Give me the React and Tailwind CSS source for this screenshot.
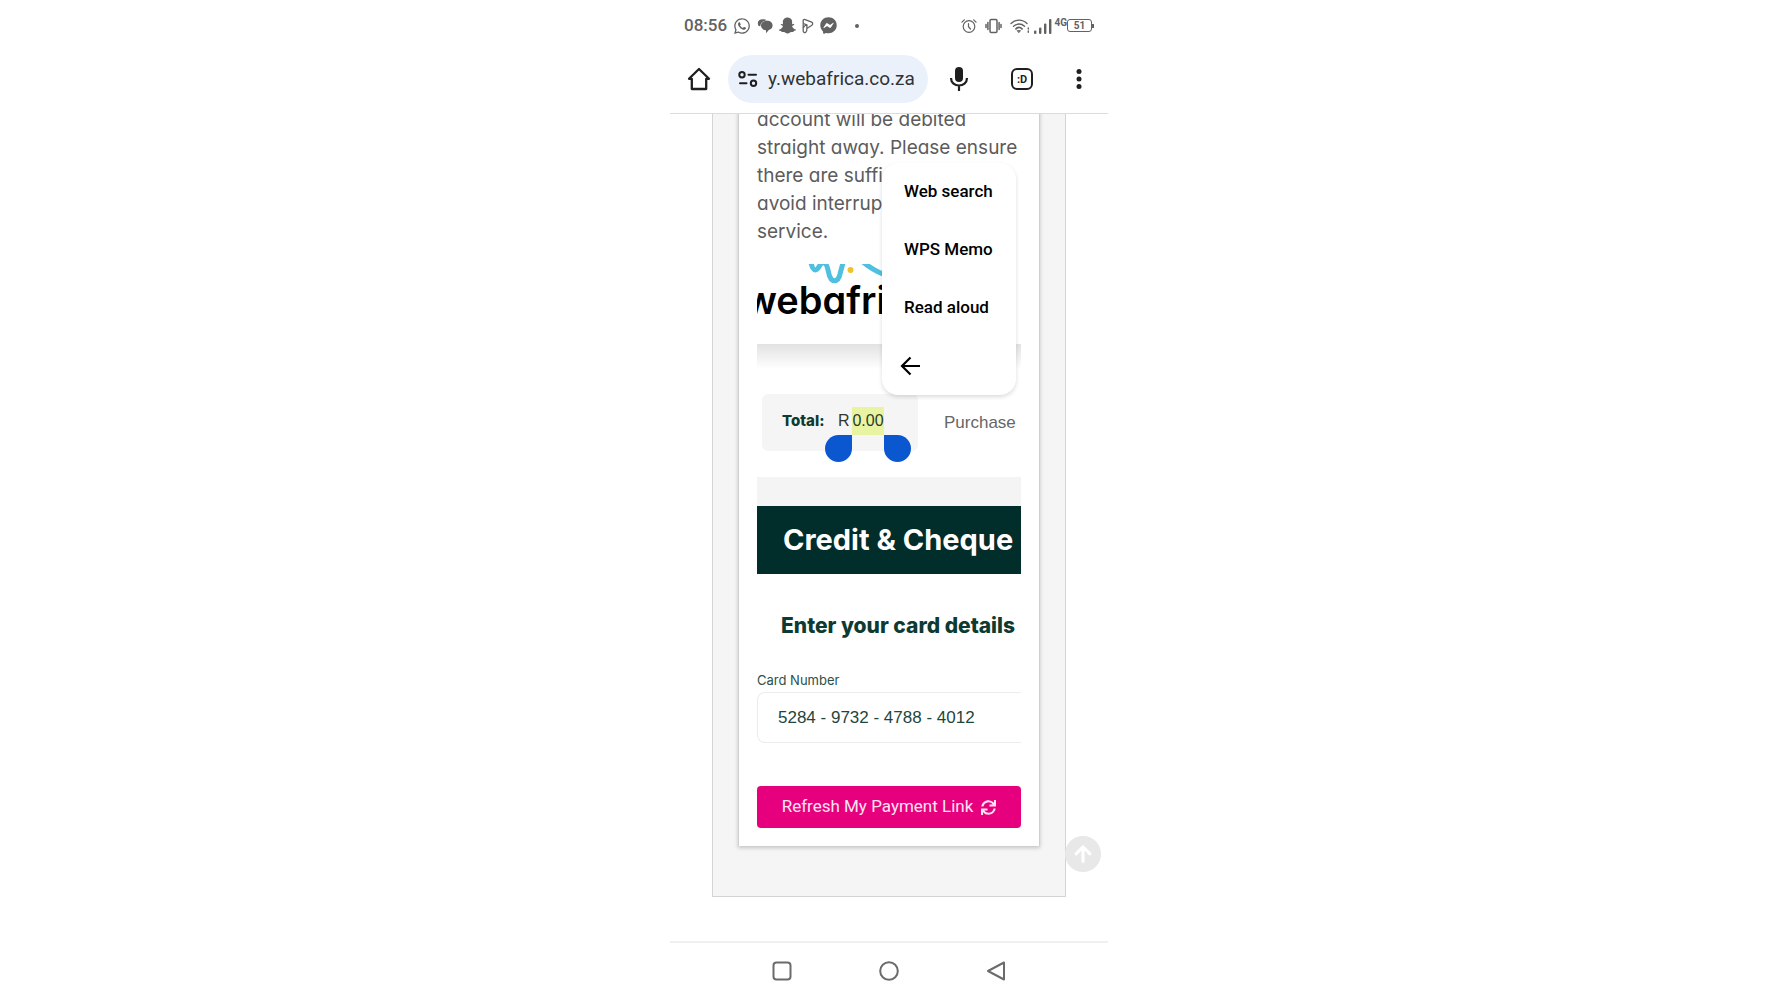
import React, { useState } from 'react';
import { FaWhatsapp, FaSnapchatGhost, FaFacebookMessenger, FaSync, FaArrowUp } from 'react-icons/fa';

const menuItems = ['Web search', 'WPS Memo', 'Read aloud'];

const ChatBubbles = () => (
  <svg width="16" height="16" viewBox="0 0 16 16" fill="currentColor">
    <path d="M.8 5C.8 2.500 3 1.200 5.500 1.200c2 0 3.500.4 4.500 1.300C6.500 2.500 3.600 4.500 3.300 8.200L1.600 7.900C1 7 .8 6 .8 5z" />
    <path d="M10 2.800c3.400 0 5.600 1.900 5.600 4.600 0 2.300-1.500 3.900-3.800 4.500L9 15.200v-3C6 12 4 10.300 4 7.600c0-2.800 2.400-4.800 6-4.800z" />
  </svg>
);

const PlayTag = () => (
  <svg width="12" height="16" viewBox="0 0 12 16" fill="none" stroke="currentColor" strokeWidth="1.300" strokeLinejoin="round">
    <path d="M1.200 2.500c0-1 1-1.300 2-.9l6.500 2.600c1.200.6 1.300 2.300.2 3L4.800 10.500M1.200 2.500V13c0 1.500 1.500 2 2.600 1.200 1.200-.9 1.200-2.200 1-3.700" />
    <path d="M1.200 5.500l3.800 1.300M1.200 10c.5-1.500 2.300-3 3.800-3.200l-.2 3.700" />
  </svg>
);

const AlarmIcon = () => (
  <svg width="16" height="16" viewBox="0 0 16 16" fill="none" stroke="currentColor" strokeWidth="1.200" strokeLinecap="round">
    <circle cx="8" cy="8.500" r="5.800" />
    <path d="M7.500 5.500v3.200l2 2.300M1 4.200L3.300 1.800M15 4.200L12.700 1.800" />
  </svg>
);

const VibrateIcon = () => (
  <svg width="17" height="16" viewBox="0 0 17 16" fill="none" stroke="currentColor" strokeWidth="1.500" strokeLinecap="round">
    <rect x="5" y="1.500" width="7" height="13" rx="1.200" />
    <path d="M2.900 4.500v7M14.100 4.500v7M1 6.500v3M16 6.500v3" />
  </svg>
);

const WifiIcon = () => (
  <svg width="20" height="16" viewBox="0 0 20 16" fill="none" stroke="currentColor" strokeWidth="1.400" strokeLinecap="round">
    <path d="M1 5.500C5.500 1 12.500 1 17 5.500M3.500 8.300c3.200-3 7.800-3 11 0" />
    <path d="M6 10.800c1.900-1.700 4.200-1.700 6 0" strokeWidth="1.800" />
    <path d="M7.500 12.600h3L9 14.500z" fill="currentColor" strokeWidth=".8" />
    <path d="M18.300 10v1M18.300 13v1.300" />
  </svg>
);

const SignalIcon = () => (
  <svg width="18" height="16" viewBox="0 0 18 16" fill="currentColor">
    <rect x="0" y="12.500" width="2.400" height="3.500" rx="1" />
    <rect x="5" y="9.500" width="2.400" height="6.500" rx="1" />
    <rect x="10" y="5.500" width="2.400" height="10.500" rx="1" />
    <rect x="15" y="1" width="2.400" height="15" rx="1" />
  </svg>
);

const HomeIcon = () => (
  <svg width="24" height="24" viewBox="0 0 24 24" fill="none" stroke="currentColor" strokeWidth="2.300" strokeLinejoin="round" strokeLinecap="round">
    <path d="M2 11.800L12 2l10 9.800h-2.800V22H4.800V11.800z" />
  </svg>
);

const TuneIcon = () => (
  <svg width="20" height="16" viewBox="0 0 20 16" fill="none" stroke="currentColor" strokeWidth="2" strokeLinecap="round" className="shrink-0">
    <circle cx="4" cy="3.700" r="2.700" />
    <path d="M10.500 3.700h7.500M2 12.200h6.500" />
    <circle cx="15.500" cy="12.200" r="2.700" />
  </svg>
);

const MicIcon = () => (
  <svg width="20" height="26" viewBox="0 0 20 26">
    <rect x="6" y="1" width="8" height="15" rx="4" fill="currentColor" />
    <path d="M2 12c0 10 16 10 16 0M10 19.500V25" fill="none" stroke="currentColor" strokeWidth="2.200" />
  </svg>
);

const MoreIcon = () => (
  <svg width="8" height="22" viewBox="0 0 8 22" fill="currentColor">
    <circle cx="4" cy="3.500" r="2.500" />
    <circle cx="4" cy="11" r="2.500" />
    <circle cx="4" cy="18.500" r="2.500" />
  </svg>
);

const Squiggle = () => (
  <svg width="126" height="20" viewBox="0 0 126 20" className="block">
    <g fill="none" stroke="#4fc0e0" strokeWidth="5">
      <path d="M54-1c1 4 2 7 4.500 7S62 2 64.500-1h3C70 0 70.500 4 71.500 8c2 11.500 10 11.500 12 0L86-1" />
      <path d="M106-2c6 5 12 9 21 12.500" />
    </g>
    <circle cx="93.500" cy="6" r="3" fill="#f0c230" />
  </svg>
);

const StatusBar = () => (
  <div className="flex h-[51px] items-center justify-between px-3.5 text-[#626262]">
    <div className="flex items-center gap-1.5">
      <span className="font-[Roboto,sans-serif] text-[17px] font-medium">08:56</span>
      <FaWhatsapp size={18} />
      <ChatBubbles />
      <FaSnapchatGhost size={17} />
      <PlayTag />
      <FaFacebookMessenger size={17} />
      <span className="ml-3 h-1 w-1 rounded-full bg-[#626262]" />
    </div>
    <div className="flex items-center">
      <AlarmIcon />
      <span className="ml-2"><VibrateIcon /></span>
      <span className="ml-2"><WifiIcon /></span>
      <span className="ml-1"><SignalIcon /></span>
      <span className="ml-0.5 self-start font-[Roboto,sans-serif] text-[10px] leading-none font-bold">4G</span>
      <span className="flex h-[13px] w-[25px] items-center justify-center rounded-[3px] border border-[#626262] font-[Roboto,sans-serif] text-[10px] leading-none font-bold">51</span>
      <span className="h-1 w-0.5 bg-[#626262]" />
    </div>
  </div>
);

const Toolbar = () => {
  const [url, setUrl] = useState('y.webafrica.co.za');

  return (
    <div className="flex items-center border-b border-[#dcdcdc] px-[17px] pt-1 pb-2.5 text-[#1f1f1f]">
      <button type="button" aria-label="Home" className="mr-[17px]"><HomeIcon /></button>
      <div className="flex h-12 w-[200px] items-center gap-2.5 rounded-full bg-[#ebf1fa] pl-2.5">
        <TuneIcon />
        <input
          aria-label="Address"
          value={url}
          onChange={e => setUrl(e.target.value)}
          className="w-full min-w-0 font-[Roboto,sans-serif] text-[19px] text-[#303236] outline-none"
        />
      </div>
      <div className="flex flex-1 items-center justify-between pl-[21px] pr-2">
        <button type="button" aria-label="Voice search"><MicIcon /></button>
        <button type="button" aria-label="Tabs" className="flex h-[22px] w-[22px] items-center justify-center rounded-[6px] border-2 border-[#1f1f1f] font-[Roboto,sans-serif] text-[11px] leading-none font-bold">
          :D
        </button>
        <button type="button" aria-label="More"><MoreIcon /></button>
      </div>
    </div>
  );
};

const SelectionMenu = () => (
  <div className="absolute top-[57px] right-[5px] flex w-[134px] flex-col rounded-2xl bg-white font-[Roboto,sans-serif] text-[17px] font-medium text-black shadow-[0_2px_4px_rgba(0,0,0,0.14)]">
    {menuItems.map(item => (
      <button key={item} type="button" className="h-[58px] pl-[22px] text-left whitespace-nowrap">
        {item}
      </button>
    ))}
    <button type="button" aria-label="Back" className="h-[58px] pl-[18px]">
      <svg width="20" height="20" viewBox="0 0 20 20" fill="none" stroke="currentColor" strokeWidth="2.200">
        <path d="M20 10H2M10.500 1.500L2 10l8.500 8.500" />
      </svg>
    </button>
  </div>
);

const TotalRow = () => (
  <div className="mt-[25px] ml-[5px] flex items-center whitespace-nowrap">
    <div className="flex h-[57px] w-[156px] items-start rounded-md bg-[#f5f5f5] pt-[13px] pl-5">
      <span className="w-14 font-[Inter,sans-serif] text-[15px] leading-7 font-extrabold text-[#0d3a31]">Total:</span>
      <span className="w-3.5 font-[Liberation_Sans,sans-serif] text-base leading-7 text-[#333]">R</span>
      <span className="relative w-8 bg-[#e8f4a2] text-center font-[Liberation_Sans,sans-serif] text-base leading-7 text-[#2b3a2e]">
        0.00
        <span className="absolute top-7 right-full h-[27px] w-[27px] rounded-full rounded-tr-none bg-[#0b57d0]" />
        <span className="absolute top-7 left-full h-[27px] w-[27px] rounded-full rounded-tl-none bg-[#0b57d0]" />
      </span>
    </div>
    <span className="pl-[26px] font-[Liberation_Sans,sans-serif] text-[17px] text-[#666]">Purchase</span>
  </div>
);

const PaymentForm = () => {
  const [card, setCard] = useState('5284 - 9732 - 4788 - 4012');

  return (
    <form onSubmit={e => e.preventDefault()}>
      <div className="mt-[26px] h-[29px] bg-[#f4f4f4]" />
      <h2 className="overflow-hidden bg-[#012d2b] pl-[26px] font-[Inter,sans-serif] text-[29px] leading-[68px] font-bold whitespace-nowrap text-white">
        Credit &amp; Cheque
      </h2>
      <h3 className="mt-9 pl-6 font-[Inter,sans-serif] text-[21px] leading-8 font-extrabold whitespace-nowrap text-[#0d3a31]">
        Enter your card details
      </h3>
      <label htmlFor="card" className="mt-7 block font-[Inter,sans-serif] text-[13px] leading-5 text-[#2c5048]">
        Card Number
      </label>
      <input
        id="card"
        value={card}
        onChange={e => setCard(e.target.value)}
        className="mt-0.5 block h-[51px] w-full rounded-l-lg border border-r-0 border-[#ececec] pl-5 font-[Liberation_Sans,sans-serif] text-[17px] text-[#1f463d] outline-none"
      />
      <button type="submit" className="mt-[43px] flex h-[42px] w-full items-center justify-center gap-2 rounded bg-[#e6007e] font-[Roboto,sans-serif] text-[17px] whitespace-nowrap text-[#ffe3f2]">
        Refresh My Payment Link
        <FaSync size={15} />
      </button>
    </form>
  );
};

const App = () => {
  return (
    <div className="min-h-screen bg-white">
      <div className="mx-auto flex min-h-screen max-w-[438px] flex-col">
        <StatusBar />
        <Toolbar />

        <main className="relative flex-1 overflow-hidden px-[42px] pb-[43px]">
          <div className="border border-t-0 border-[#d4d4d4] bg-[#f5f5f5] px-[25px] pb-[50px]">
            <div className="border-x border-[#d0d0d0] bg-white px-[18px] pb-[18px] shadow-[0_2px_4px_rgba(0,0,0,0.2)]">
              <div className="relative -mt-2">
                <p className="font-[Inter,sans-serif] text-[19px] leading-7 whitespace-nowrap text-[#5c5c5c] [font-feature-settings:'cv11']">
                  account will be debited<br />
                  straight away. Please ensure<br />
                  there are suffi<br />
                  avoid interrup<br />
                  service.
                </p>
                <div className="mt-[18px] h-[52px] w-[126px] overflow-hidden">
                  <Squiggle />
                  <div className="-ml-3 font-[Inter,sans-serif] text-[38px] leading-8 font-semibold text-black [font-feature-settings:'cv11']">
                    webafri
                  </div>
                </div>
                <div className="mt-7 h-[25px] bg-linear-to-b from-[#e2e2e2] to-white" />
                <TotalRow />
                <PaymentForm />
                <SelectionMenu />
              </div>
            </div>
          </div>
          <button type="button" aria-label="Back to top" className="absolute right-[7px] bottom-[69px] flex h-9 w-9 items-center justify-center rounded-full bg-[#e8e8e8] text-white">
            <FaArrowUp size={20} />
          </button>
        </main>

        <nav className="flex h-[59px] items-center justify-between border-t-2 border-[#f0f0f0] px-[102px] pb-0.5 text-[#6b6b6b]">
          <button type="button" aria-label="Recents">
            <svg width="20" height="20" viewBox="0 0 20 20" fill="none" stroke="currentColor" strokeWidth="2">
              <rect x="1.500" y="1.500" width="17" height="17" rx="3" />
            </svg>
          </button>
          <button type="button" aria-label="Home screen">
            <svg width="20" height="20" viewBox="0 0 20 20" fill="none" stroke="currentColor" strokeWidth="2">
              <circle cx="10" cy="10" r="8.800" />
            </svg>
          </button>
          <button type="button" aria-label="Go back">
            <svg width="20" height="20" viewBox="0 0 20 20" fill="none" stroke="currentColor" strokeWidth="2" strokeLinejoin="round">
              <path d="M18 1.500v17L2 10z" />
            </svg>
          </button>
        </nav>
      </div>
    </div>
  );
};

export default App;
